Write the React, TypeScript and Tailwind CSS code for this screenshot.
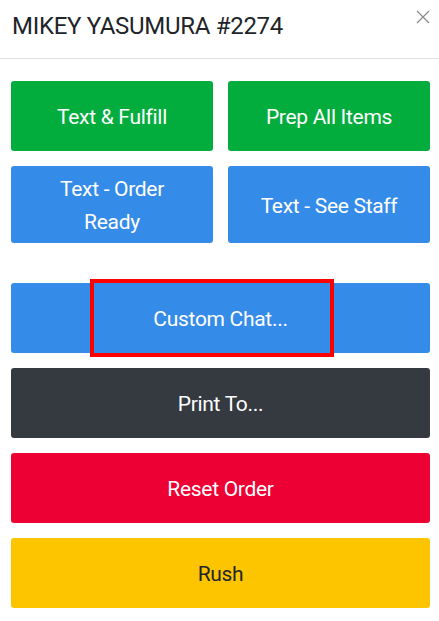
import React from "react";

const font = { fontFamily: "Roboto, 'Liberation Sans', sans-serif" };

export default function App() {
  return (
    <div className="w-[439px] h-[621px] bg-white overflow-hidden" style={font}>
      <div className="relative h-[59px] border-b border-[#dee2e6] flex items-center pl-[12px]">
        <h1 className="text-[24px] text-[#212529] tracking-[-0.3px] leading-none pb-[6px]">MIKEY YASUMURA #2274</h1>
        <svg className="absolute left-[416px] top-[10px]" width="14" height="14" viewBox="0 0 14 14">
          <path d="M1 1L13 13M13 1L1 13" stroke="#8a8a8a" strokeWidth="1.2" />
        </svg>
      </div>
      <div className="pl-[11px] pr-[9px] pt-[22px] flex flex-col">
        <div className="grid grid-cols-2 gap-x-[15px] gap-y-[15px]">
          <button className="h-[70px] pt-[4px] rounded-[3px] bg-[#02ad3e] text-white text-[21px] tracking-[-0.3px]">Text &amp; Fulfill</button>
          <button className="h-[70px] pt-[4px] rounded-[3px] bg-[#02ad3e] text-white text-[21px] tracking-[-0.3px]">Prep All Items</button>
          <button className="h-[77px] pt-[3px] rounded-[3px] bg-[#358be8] text-white text-[21px] leading-[33px] tracking-[-0.3px] px-[30px]">Text - Order Ready</button>
          <button className="h-[77px] pt-[4px] rounded-[3px] bg-[#358be8] text-white text-[21px] tracking-[-0.3px]">Text - See Staff</button>
        </div>
        <div className="mt-[40px] flex flex-col gap-[15px]">
          <button className="relative h-[70px] pt-[4px] rounded-[3px] bg-[#358be8] text-white text-[21px] tracking-[-0.3px]">
            <span className="absolute left-[79px] top-[-4px] w-[244px] h-[78px] border-[4px] border-solid border-[#ff0000]" />
            <span className="relative">Custom Chat...</span>
          </button>
          <button className="h-[70px] pt-[4px] rounded-[3px] bg-[#343a40] text-white text-[21px] tracking-[-0.3px]">Print To...</button>
          <button className="h-[70px] pt-[4px] rounded-[3px] bg-[#ed0034] text-white text-[21px] tracking-[-0.3px]">Reset Order</button>
          <button className="h-[70px] pt-[4px] rounded-[3px] bg-[#fdc500] text-[#212529] text-[21px] tracking-[-0.3px]">Rush</button>
        </div>
      </div>
    </div>
  );
}
